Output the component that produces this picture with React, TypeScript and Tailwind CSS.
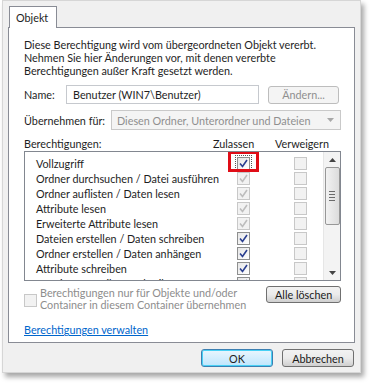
import React from "react";

const font = { fontFamily: 'Lato, "Noto Sans", sans-serif' };

function Check({ color }: { color: string }) {
  return (
    <svg width="9" height="9" viewBox="0 0 9 9" className="block">
      <path d="M1 4.5 L3.5 7.5 L8 1" fill="none" stroke={color} strokeWidth="1.6" />
    </svg>
  );
}

function Box({ state }: { state: "on" | "dis-on" | "dis" | "focus" }) {
  const disabled = state === "dis" || state === "dis-on";
  return (
    <div
      className={
        "w-[13px] h-[13px] flex items-center justify-center border " +
        (disabled
          ? "border-[#c8c8c8] bg-[#f2f2f2]"
          : "border-[#8e8f8f] bg-gradient-to-br from-[#e6e6e6] to-[#ffffff]")
      }
    >
      {state === "on" || state === "focus" ? <Check color="#2a3e8f" /> : null}
      {state === "dis-on" ? <Check color="#bdbdbd" /> : null}
    </div>
  );
}

const rows: { label: string; allow: "on" | "dis-on" | "focus" }[] = [
  { label: "Vollzugriff", allow: "focus" },
  { label: "Ordner durchsuchen / Datei ausführen", allow: "dis-on" },
  { label: "Ordner auflisten / Daten lesen", allow: "dis-on" },
  { label: "Attribute lesen", allow: "dis-on" },
  { label: "Erweiterte Attribute lesen", allow: "dis-on" },
  { label: "Dateien erstellen / Daten schreiben", allow: "on" },
  { label: "Ordner erstellen / Daten anhängen", allow: "on" },
  { label: "Attribute schreiben", allow: "on" },
  { label: "Erweiterte Attribute schreiben", allow: "on" },
];

function Btn({ children, className = "" }: { children: React.ReactNode; className?: string }) {
  return (
    <div
      className={
        "flex items-center justify-center rounded-[3px] border border-[#707070] bg-gradient-to-b from-[#f2f2f2] via-[#ebebeb] to-[#cfcfcf] text-[#1a1a1a] whitespace-nowrap " +
        className
      }
    >
      {children}
    </div>
  );
}

export default function App() {
  return (
    <div className="w-[371px] h-[383px] bg-white relative overflow-hidden text-[10.8px] leading-[13px] text-[#1e1e1e]" style={font}>
      <div className="ml-[2px] w-[359px] h-[373px] bg-[#f0f0f0] border border-[#d6d6d6] shadow-[3px_4px_5px_rgba(0,0,0,0.35)] px-[5px] pt-[5px] flex flex-col">
        {/* tab */}
        <div className="flex">
          <div className="ml-[1px] w-[48px] h-[22px] bg-white border border-b-0 border-[#898c95] flex items-center pl-[6px] z-10 -mb-px">
            Objekt
          </div>
        </div>
        {/* panel */}
        <div className="w-[347px] h-[316px] bg-white border border-[#898c95] pl-[15px] pr-[13px] pt-[10px] flex flex-col">
          <p className="leading-[13px] whitespace-nowrap">
            Diese Berechtigung wird vom übergeordneten Objekt vererbt.
            <br />
            Nehmen Sie hier Änderungen vor, mit denen vererbte
            <br />
            Berechtigungen außer Kraft gesetzt werden.
          </p>
          <div className="mt-[8px] flex items-center h-[19px]">
            <span className="w-[42px]">Name:</span>
            <div className="w-[193px] h-[19px] border border-[#c6c9ce] flex items-center pl-[6px] whitespace-nowrap">
              Benutzer (WIN7\Benutzer)
            </div>
            <div className="ml-[9px] w-[71px] h-[18px] border border-[#bdbdbd] rounded-[3px] bg-[#f4f4f4] flex items-center justify-center text-[#8f8f8f]">
              Ändern...
            </div>
          </div>
          <div className="mt-[6px] flex items-center h-[20px]">
            <span className="w-[87px] whitespace-nowrap">Übernehmen für:</span>
            <div className="w-[230px] h-[20px] border border-[#c9c9c9] bg-[#f4f4f4] flex items-center pl-[5px] text-[#8f8f8f] whitespace-nowrap">
              <span className="flex-1">Diesen Ordner, Unterordner und Dateien</span>
              <svg width="7" height="4" viewBox="0 0 7 4" className="mr-[6px]">
                <path d="M0 0 H7 L3.5 4 Z" fill="#a8a8a8" />
              </svg>
            </div>
          </div>
          <div className="mt-[7px] flex items-end h-[13px] whitespace-nowrap">
            <span className="w-[189px]">Berechtigungen:</span>
            <span className="w-[62px]">Zulassen</span>
            <span>Verweigern</span>
          </div>
          <div className="mt-[1px] w-[317px] h-[130px] border border-[#828790] flex overflow-hidden">
            <div className="flex-1 pt-[4px] flex flex-col">
              {rows.map((r, i) => (
                <div key={i} className="h-[15px] flex items-center shrink-0">
                  <span className="w-[212px] pl-[11px] whitespace-nowrap overflow-hidden">{r.label}</span>
                  {r.allow === "focus" ? (
                    <div className="relative">
                      <div className="absolute left-[-9px] top-[-6px] w-[31px] h-[21px] border-[3px] border-[#e00d17]" />
                      <div className="outline-1 outline-dotted outline-[#555] outline-offset-[1px]">
                        <Box state="on" />
                      </div>
                    </div>
                  ) : (
                    <Box state={r.allow} />
                  )}
                  <div className="ml-[44px]">
                    <Box state="dis" />
                  </div>
                </div>
              ))}
            </div>
            {/* scrollbar */}
            <div className="w-[17px] h-full bg-[#f3f3f3] border-l border-[#e6e6e6] flex flex-col items-center">
              <div className="h-[15px] flex items-center justify-center">
                <svg width="7" height="4" viewBox="0 0 7 4">
                  <path d="M0 4 H7 L3.5 0 Z" fill="#444" />
                </svg>
              </div>
              <div className="w-[15px] h-[58px] rounded-[2px] border border-[#979797] bg-gradient-to-r from-[#f2f2f2] to-[#dcdcdc] flex flex-col items-center justify-center gap-[2px]">
                <div className="w-[6px] h-px bg-[#6b6b6b]" />
                <div className="w-[6px] h-px bg-[#6b6b6b]" />
                <div className="w-[6px] h-px bg-[#6b6b6b]" />
                <div className="w-[6px] h-px bg-[#6b6b6b]" />
              </div>
              <div className="flex-1" />
              <div className="h-[15px] flex items-center justify-center">
                <svg width="7" height="4" viewBox="0 0 7 4">
                  <path d="M0 0 H7 L3.5 4 Z" fill="#444" />
                </svg>
              </div>
            </div>
          </div>
          <div className="mt-[5px] flex">
            <div className="mt-[8px] w-[13px] h-[13px] border border-[#c8c8c8] bg-[#f2f2f2] shrink-0" />
            <div className="ml-[3px] mt-[1px] text-[#8d8d8d] leading-[12px] w-[222px] whitespace-nowrap">
              Berechtigungen nur für Objekte und/oder
              <br />
              Container in diesem Container übernehmen
            </div>
            <Btn className="ml-[5px] w-[75px] h-[17px]">Alle löschen</Btn>
          </div>
          <div className="mt-[12px]">
            <span className="text-[#0066cc] underline">Berechtigungen verwalten</span>
          </div>
        </div>
        {/* bottom buttons */}
        <div className="mt-[6px] flex justify-end pr-[1px]">
          <div className="w-[72px] h-[18px] rounded-[3px] border border-[#3c7fb1] bg-gradient-to-b from-[#eaf6fd] to-[#bee6fd] shadow-[inset_0_0_0_1px_#48d1f5] flex items-center justify-center">
            OK
          </div>
          <Btn className="ml-[9px] w-[72px] h-[18px]">Abbrechen</Btn>
        </div>
      </div>
    </div>
  );
}
